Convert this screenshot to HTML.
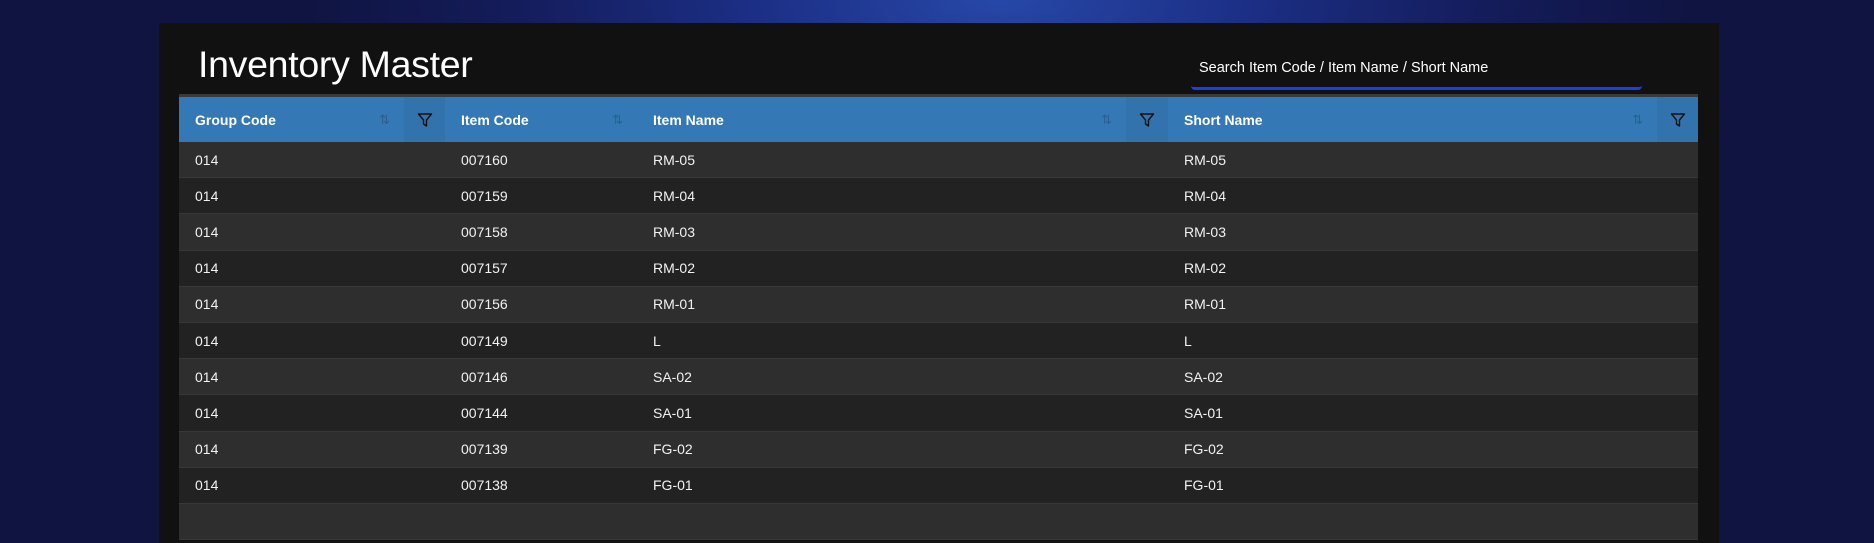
<!DOCTYPE html>
<html><head><meta charset="utf-8"><style>
*{margin:0;padding:0;box-sizing:border-box}
body{width:1874px;height:511px;overflow:hidden;font-family:"Liberation Sans",sans-serif;
background:radial-gradient(ellipse 700px 260px at 1000px 0px,#2748a8 0%,#1c2f86 35%,#141c5a 70%,#0f1440 100%),#0f1440;position:relative}
.panel{position:absolute;left:159px;top:23px;width:1560px;height:520px;background:#111}
h1{position:absolute;left:198px;top:43px;font-size:37.5px;font-weight:normal;color:#fff;letter-spacing:-0.3px}
.search{position:absolute;left:1191px;top:50px;width:451px;height:40px;border-bottom:3px solid #1a3fe6;border-radius:0 0 4px 4px;color:#fff;font-size:14.5px;padding:10px 0 0 8px}
.tbl{position:absolute;left:179px;top:94px;width:1519px;border-top:3px solid #3a3a3a}
.row{display:flex;height:36.2px;align-items:center;color:#f2f2f2;font-size:14px;border-bottom:1px solid #383838}
.row:nth-child(odd){background:#2e2e2e}.row:nth-child(even){background:#222}
.hd{display:flex;height:45px;background:#3479b5;color:#fff;font-weight:bold;font-size:14px;align-items:center}
.c{padding-left:16px;position:relative;height:100%;display:flex;align-items:center}
.f{background:#3273ad;height:100%;display:flex;align-items:center;justify-content:center}
.s{position:absolute;right:14px;color:#2a5f8f;font-size:13px;font-weight:normal}
</style></head><body>
<div class="panel"></div>
<h1>Inventory Master</h1>
<div class="search">Search Item Code / Item Name / Short Name</div>
<div class="tbl">
<div class="hd">
<div class="c" style="width:225px">Group Code<span class="s">⇅</span></div>
<div class="f" style="width:41px"><svg width="16" height="16" viewBox="0 0 16 16"><path d="M1.5 2h13l-5 6v6l-3-2V8z" fill="none" stroke="#111" stroke-width="1.4" stroke-linejoin="round"/></svg></div>
<div class="c" style="width:192px">Item Code<span class="s">⇅</span></div>
<div class="c" style="width:489px">Item Name<span class="s">⇅</span></div>
<div class="f" style="width:42px"><svg width="16" height="16" viewBox="0 0 16 16"><path d="M1.5 2h13l-5 6v6l-3-2V8z" fill="none" stroke="#111" stroke-width="1.4" stroke-linejoin="round"/></svg></div>
<div class="c" style="width:489px">Short Name<span class="s">⇅</span></div>
<div class="f" style="width:41px"><svg width="16" height="16" viewBox="0 0 16 16"><path d="M1.5 2h13l-5 6v6l-3-2V8z" fill="none" stroke="#111" stroke-width="1.4" stroke-linejoin="round"/></svg></div>
</div>
<div>
<div class="row"><div class="c" style="width:266px">014</div><div class="c" style="width:192px">007160</div><div class="c" style="width:531px">RM-05</div><div class="c">RM-05</div></div>
<div class="row"><div class="c" style="width:266px">014</div><div class="c" style="width:192px">007159</div><div class="c" style="width:531px">RM-04</div><div class="c">RM-04</div></div>
<div class="row"><div class="c" style="width:266px">014</div><div class="c" style="width:192px">007158</div><div class="c" style="width:531px">RM-03</div><div class="c">RM-03</div></div>
<div class="row"><div class="c" style="width:266px">014</div><div class="c" style="width:192px">007157</div><div class="c" style="width:531px">RM-02</div><div class="c">RM-02</div></div>
<div class="row"><div class="c" style="width:266px">014</div><div class="c" style="width:192px">007156</div><div class="c" style="width:531px">RM-01</div><div class="c">RM-01</div></div>
<div class="row"><div class="c" style="width:266px">014</div><div class="c" style="width:192px">007149</div><div class="c" style="width:531px">L</div><div class="c">L</div></div>
<div class="row"><div class="c" style="width:266px">014</div><div class="c" style="width:192px">007146</div><div class="c" style="width:531px">SA-02</div><div class="c">SA-02</div></div>
<div class="row"><div class="c" style="width:266px">014</div><div class="c" style="width:192px">007144</div><div class="c" style="width:531px">SA-01</div><div class="c">SA-01</div></div>
<div class="row"><div class="c" style="width:266px">014</div><div class="c" style="width:192px">007139</div><div class="c" style="width:531px">FG-02</div><div class="c">FG-02</div></div>
<div class="row"><div class="c" style="width:266px">014</div><div class="c" style="width:192px">007138</div><div class="c" style="width:531px">FG-01</div><div class="c">FG-01</div></div>
<div class="row"></div>
</div>
</div>
</body></html>
